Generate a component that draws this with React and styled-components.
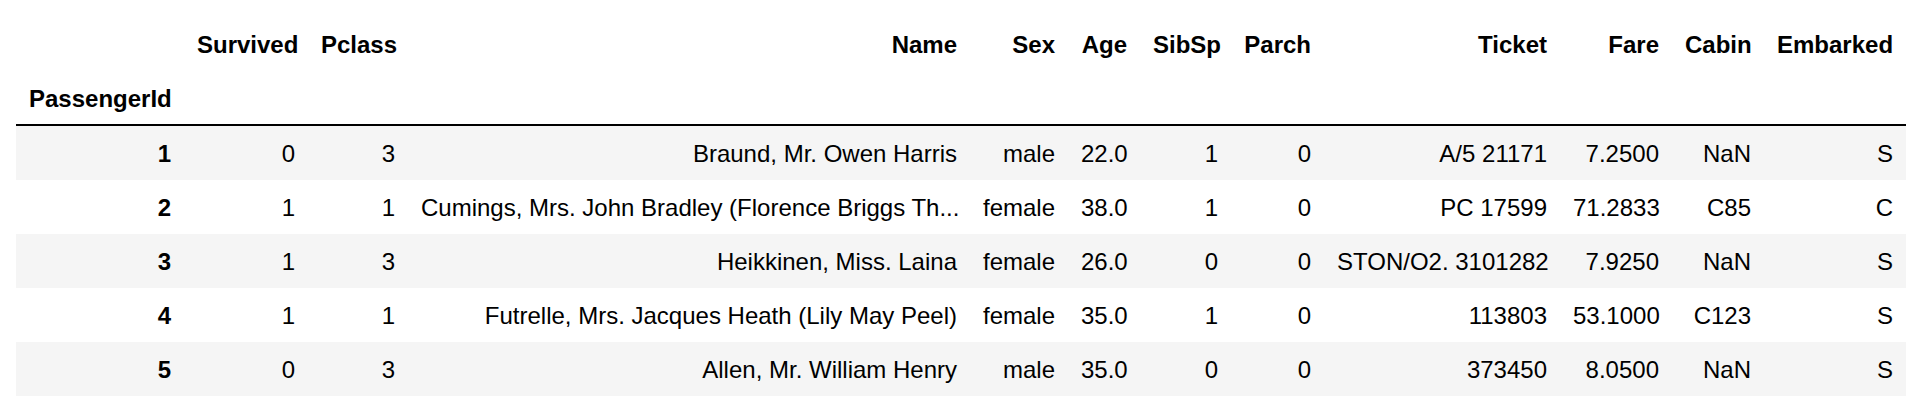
import React from 'react';
import styled, { createGlobalStyle } from 'styled-components';

const GlobalStyle = createGlobalStyle`
  body {
    margin: 0;
    background: #fff;
    font-family: "Liberation Sans", Arial, Helvetica, sans-serif;
    color: #000;
  }
`;

const COLUMNS = [
  { key: 'Survived', width: 124 },
  { key: 'Pclass', width: 100 },
  { key: 'Name', width: 562 },
  { key: 'Sex', width: 98 },
  { key: 'Age', width: 72 },
  { key: 'SibSp', width: 91 },
  { key: 'Parch', width: 93 },
  { key: 'Ticket', width: 236 },
  { key: 'Fare', width: 112 },
  { key: 'Cabin', width: 92 },
  { key: 'Embarked', width: 142 },
];

const ROWS = [
  ['1', '0', '3', 'Braund, Mr. Owen Harris', 'male', '22.0', '1', '0', 'A/5 21171', '7.2500', 'NaN', 'S'],
  ['2', '1', '1', 'Cumings, Mrs. John Bradley (Florence Briggs Th...', 'female', '38.0', '1', '0', 'PC 17599', '71.2833', 'C85', 'C'],
  ['3', '1', '3', 'Heikkinen, Miss. Laina', 'female', '26.0', '0', '0', 'STON/O2. 3101282', '7.9250', 'NaN', 'S'],
  ['4', '1', '1', 'Futrelle, Mrs. Jacques Heath (Lily May Peel)', 'female', '35.0', '1', '0', '113803', '53.1000', 'C123', 'S'],
  ['5', '0', '3', 'Allen, Mr. William Henry', 'male', '35.0', '0', '0', '373450', '8.0500', 'NaN', 'S'],
];

const Output = styled.div`
  padding: 18px 0 0 16px;
`;

const Table = styled.table`
  table-layout: fixed;
  width: 1890px;
  border-collapse: separate;
  border-spacing: 0;
  font-size: 24px;
  line-height: 27px;
`;

const Col = styled.col`
  width: ${p => p.$w}px;
`;

const HeadRow = styled.tr``;

const HeadCell = styled.th`
  padding: ${p => (p.$names ? '12.5px 13px' : '12.5px 13px 14.5px')};
  text-align: ${p => (p.$left ? 'left' : 'right')};
  font-weight: 700;
  white-space: nowrap;
  vertical-align: middle;
  border-bottom: ${p => (p.$names ? '2px solid #000' : 'none')};
`;

const BodyRow = styled.tr`
  background: ${p => (p.$striped ? '#f5f5f5' : '#fff')};
`;

const IndexCell = styled.th`
  padding: 13.5px 13px;
  text-align: right;
  font-weight: 700;
  white-space: nowrap;
  vertical-align: middle;
`;

const Cell = styled.td`
  padding: 13.5px 13px;
  text-align: right;
  white-space: nowrap;
  vertical-align: middle;
`;

const App = () => (
  <>
    <GlobalStyle />
    <Output>
      <Table>
        <colgroup>
          <Col $w={168} />
          {COLUMNS.map(c => (
            <Col key={c.key} $w={c.width} />
          ))}
        </colgroup>
        <thead>
          <HeadRow>
            <HeadCell />
            {COLUMNS.map(c => (
              <HeadCell key={c.key}>{c.key}</HeadCell>
            ))}
          </HeadRow>
          <HeadRow>
            <HeadCell $names $left>PassengerId</HeadCell>
            {COLUMNS.map(c => (
              <HeadCell key={c.key} $names />
            ))}
          </HeadRow>
        </thead>
        <tbody>
          {ROWS.map((row, i) => (
            <BodyRow key={row[0]} $striped={i % 2 === 0}>
              <IndexCell>{row[0]}</IndexCell>
              {row.slice(1).map((v, j) => (
                <Cell key={j}>{v}</Cell>
              ))}
            </BodyRow>
          ))}
        </tbody>
      </Table>
    </Output>
  </>
);

export default App;
